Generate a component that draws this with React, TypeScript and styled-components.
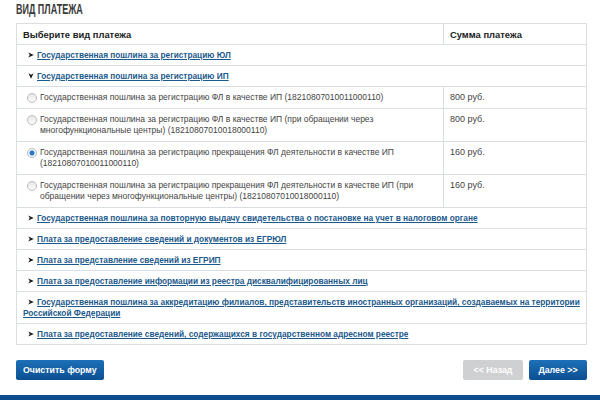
import styled, { createGlobalStyle } from "styled-components";

type Group = { title: string; open?: boolean };

const groupsBefore: Group[] = [
  { title: "Государственная пошлина за регистрацию ЮЛ" },
  { title: "Государственная пошлина за регистрацию ИП", open: true },
];

const options = [
  {
    text: "Государственная пошлина за регистрацию ФЛ в качестве ИП (18210807010011000110)",
    sum: "800 руб.",
  },
  {
    text: "Государственная пошлина за регистрацию ФЛ в качестве ИП (при обращении через многофункциональные центры) (18210807010018000110)",
    sum: "800 руб.",
  },
  {
    text: "Государственная пошлина за регистрацию прекращения ФЛ деятельности в качестве ИП (18210807010011000110)",
    sum: "160 руб.",
    checked: true,
  },
  {
    text: "Государственная пошлина за регистрацию прекращения ФЛ деятельности в качестве ИП (при обращении через многофункциональные центры) (18210807010018000110)",
    sum: "160 руб.",
  },
];

const groupsAfter: Group[] = [
  { title: "Государственная пошлина за повторную выдачу свидетельства о постановке на учет в налоговом органе" },
  { title: "Плата за предоставление сведений и документов из ЕГРЮЛ" },
  { title: "Плата за представление сведений из ЕГРИП" },
  { title: "Плата за предоставление информации из реестра дисквалифицированных лиц" },
  {
    title:
      "Государственная пошлина за аккредитацию филиалов, представительств иностранных организаций, создаваемых на территории Российской Федерации",
  },
  { title: "Плата за предоставление сведений, содержащихся в государственном адресном реестре" },
];

export default function App() {
  const renderGroup = (g: Group) => (
    <tr key={g.title}>
      <GroupCell colSpan={2}>
        <Arrow $open={g.open} viewBox="0 0 8 8">
          <path d="M0.3 0.6 L7.7 4 L0.3 7.4 L2.3 4 Z" fill="#1a1a1a" />
        </Arrow>
        <GroupLink href="#">{g.title}</GroupLink>
      </GroupCell>
    </tr>
  );

  return (
    <>
      <GlobalStyle />
      <Page>
        <TitleRow>
          <Title>ВИД ПЛАТЕЖА</Title>
        </TitleRow>
        <Table>
          <thead>
            <tr>
              <HeadCell>Выберите вид платежа</HeadCell>
              <HeadCell $sum>Сумма платежа</HeadCell>
            </tr>
          </thead>
          <tbody>
            {groupsBefore.map(renderGroup)}
            {options.map((o) => (
              <tr key={o.text}>
                <OptionCell>
                  <OptionLabel>
                    <Radio $checked={o.checked} />
                    <span>{o.text}</span>
                  </OptionLabel>
                </OptionCell>
                <SumCell>{o.sum}</SumCell>
              </tr>
            ))}
            {groupsAfter.map(renderGroup)}
          </tbody>
        </Table>
        <Actions>
          <Button>Очистить форму</Button>
          <NavButtons>
            <Button $disabled>&lt;&lt; Назад</Button>
            <Button>Далее &gt;&gt;</Button>
          </NavButtons>
        </Actions>
      </Page>
      <Footer />
    </>
  );
}

const GlobalStyle = createGlobalStyle`
  html, body {
    margin: 0;
    padding: 0;
    background: #fff;
    font-family: "Liberation Sans", Arial, sans-serif;
    color: #333;
  }
`;

const Page = styled.div`
  padding: 0 13px 0 16px;
  height: 395px;
  box-sizing: border-box;
  overflow: hidden;
`;

const TitleRow = styled.div`
  height: 23px;
`;

const Title = styled.h2`
  display: inline-block;
  margin: 0;
  padding-top: 1px;
  font-family: "Liberation Sans", Arial, sans-serif;
  font-weight: 700;
  font-size: 15.5px;
  line-height: 13px;
  color: #3a3a3a;
  transform: scaleX(0.58);
  transform-origin: left top;
`;

const Table = styled.table`
  width: 571px;
  border-collapse: collapse;
  border: 1px solid #d9dee3;
  font-size: 8.5px;
  line-height: 11px;
`;

const HeadCell = styled.th<{ $sum?: boolean }>`
  text-align: left;
  font-weight: 700;
  font-size: 9.4px;
  color: #222;
  padding: 5px 6px 4px;
  border: 1px solid #d9dee3;
  width: ${(p) => (p.$sum ? "130px" : "auto")};
`;

const GroupCell = styled.td`
  padding: 5px 6px 4px;
  border: 1px solid #d9dee3;
`;

const Arrow = styled.svg<{ $open?: boolean }>`
  width: 6px;
  height: 6px;
  margin: 0 3px 0 5px;
  vertical-align: 0px;
  transform: rotate(${(p) => (p.$open ? "90deg" : "0deg")});
`;

const GroupLink = styled.a`
  color: #1d5a8c;
  font-weight: 700;
  font-size: 8.3px;
  text-decoration: underline;
`;

const OptionCell = styled.td`
  padding: 5px 6px 5px;
  border: 1px solid #d9dee3;
  vertical-align: top;
  color: #444;
`;

const OptionLabel = styled.label`
  display: flex;
  align-items: flex-start;
  gap: 3px;
`;

const Radio = styled.span<{ $checked?: boolean }>`
  flex: none;
  width: 8px;
  height: 8px;
  margin: 1px 0 0 4px;
  border-radius: 50%;
  border: 1px solid #b8bcc0;
  background: ${(p) =>
    p.$checked
      ? "radial-gradient(circle, #2a78c8 0 2.2px, #eef2f6 2.8px)"
      : "linear-gradient(#e6e6e6, #fff)"};
`;

const SumCell = styled.td`
  padding: 5px 6px;
  border: 1px solid #d9dee3;
  vertical-align: top;
  color: #444;
  font-size: 9px;
`;

const Actions = styled.div`
  display: flex;
  justify-content: space-between;
  width: 571px;
  margin-top: 15px;
`;

const NavButtons = styled.div`
  display: flex;
  gap: 6px;
`;

const Button = styled.button<{ $disabled?: boolean }>`
  height: 20px;
  padding: 0 7px;
  border: none;
  border-radius: 2px;
  font-family: "Liberation Sans", Arial, sans-serif;
  font-size: 8.8px;
  font-weight: 700;
  color: #fff;
  background: ${(p) =>
    p.$disabled ? "#cfd0d1" : "linear-gradient(#1d70b8, #0b4f92)"};
  min-width: 58px;
  &:first-child {
    min-width: 60px;
  }
`;

const Footer = styled.div`
  height: 5px;
  background: #0e4d8d;
`;
